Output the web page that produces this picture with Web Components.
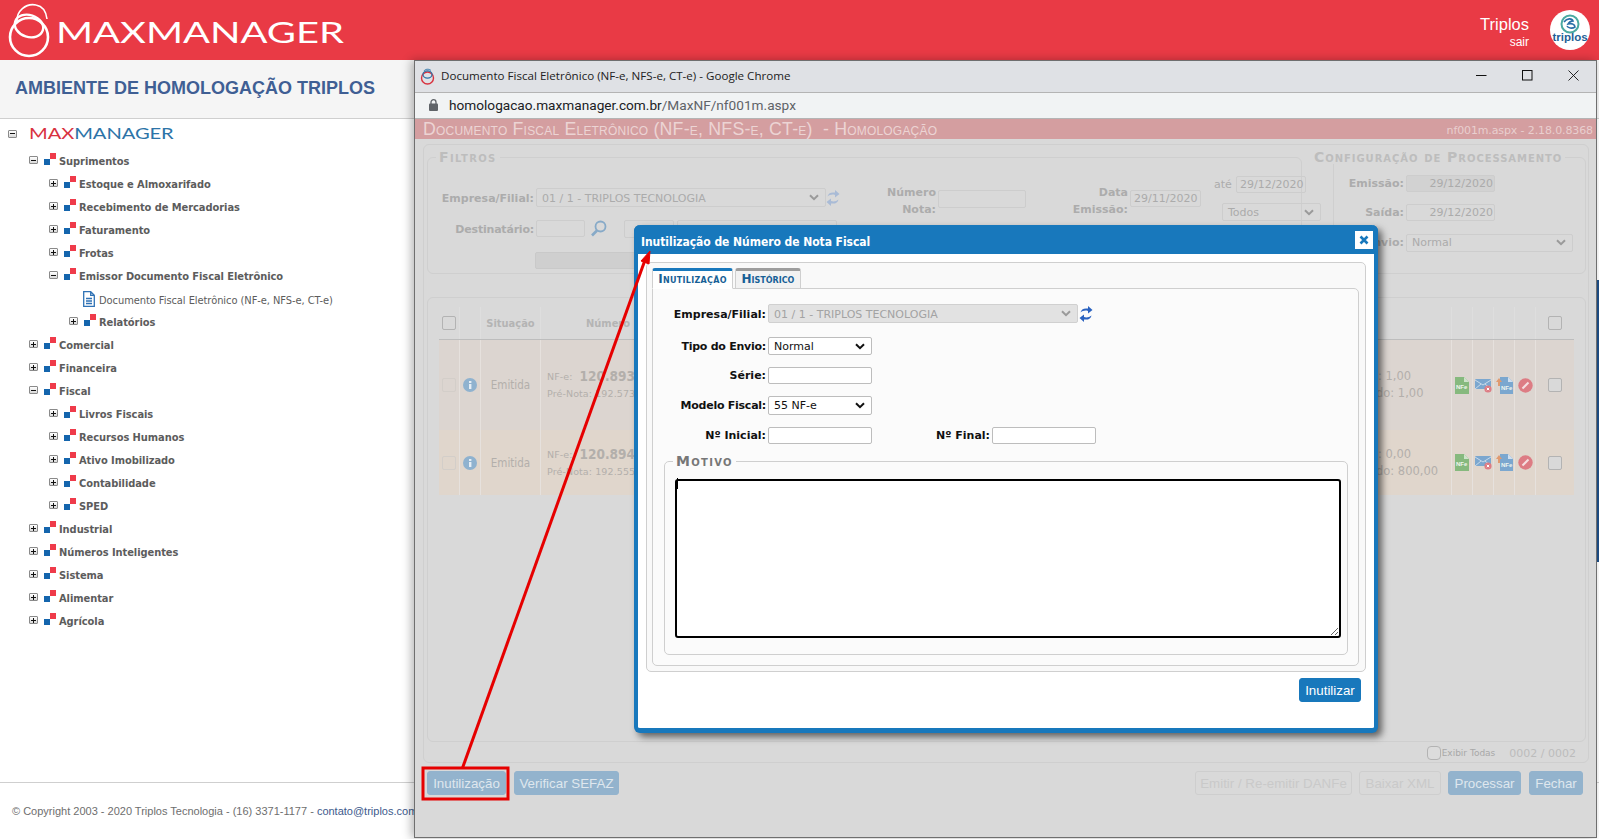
<!DOCTYPE html>
<html lang="pt-BR">
<head>
<meta charset="utf-8">
<title>MaxManager</title>
<style>
html,body{margin:0;padding:0;width:1599px;height:839px;overflow:hidden;background:#fff;font-family:"Liberation Sans",Arial,sans-serif}
</style>
</head>
<body>
<mm-app></mm-app>
<script>
const def=(n,css,render)=>customElements.define(n,class extends HTMLElement{
  connectedCallback(){ if(this.shadowRoot) return;
    const r=this.attachShadow({mode:'open'});
    r.innerHTML='<style>'+css+'</style>'+render(this);
  }});
const LABEL='"DejaVu Sans",Verdana,sans-serif';
const COND='"DejaVu Sans Condensed","DejaVu Sans",Tahoma,sans-serif';
const COLS='21px 21px 60px 1fr 21px 21px 21px 21px 38px';

/* ---------- small icons ---------- */
def('mm-refresh',':host{display:inline-flex}',e=>{const c=e.getAttribute('color')||'#2a62c0';return `<svg width="14" height="18" viewBox="0 0 14 18"><path d="M1.5 7.6C2 4.4 5 2.8 9 3.6V1l4.5 4L9 8.4V5.9C6 5.2 3.6 5.8 1.5 7.6z" fill="${c}"/><path d="M12.5 10.4C12 13.6 9 15.2 5 14.4V17L.5 13 5 9.6v2.5c3 .7 5.4.1 7.5-1.7z" fill="${c}"/></svg>`});
def('mm-info',':host{display:inline-flex}',()=>`<svg width="14" height="14" viewBox="0 0 14 14"><circle cx="7" cy="7" r="7" fill="#8fb2cf"/><rect x="6" y="6" width="2.4" height="5" fill="#e6eef5"/><rect x="6" y="3" width="2.4" height="2" fill="#e6eef5"/></svg>`);
def('mm-check',`:host{display:inline-block;width:12px;height:12px;border:1px solid var(--ck,#b3b3b3);border-radius:2px;background:var(--bg,transparent)}`,()=>'');
def('mm-nfe-icons',`:host{display:contents}
.c{display:flex;align-items:center;justify-content:center;border-right:1px solid var(--sep);box-sizing:border-box}
text{font:bold 6px "Liberation Sans",sans-serif;fill:#eef5ee}`,()=>`
<div class="c"><svg width="14" height="17" viewBox="0 0 14 17"><path d="M0 0h9l5 5v12H0z" fill="#86b97e"/><path d="M9 0l5 5H9z" fill="#cfe3cb"/><text x="1" y="12">NFe</text></svg></div>
<div class="c"><svg width="17" height="15" viewBox="0 0 17 15"><rect y="1" width="16" height="10" rx="1" fill="#7ba7cf"/><path d="M0 2l8 5 8-5M0 11l6-5M16 11l-6-5" stroke="#dbe6f0" stroke-width=".8" fill="none"/><circle cx="13" cy="11" r="3.6" fill="#dd7c84"/><path d="M11.8 9.8l2.4 2.4m0-2.4l-2.4 2.4" stroke="#fff" stroke-width="1"/></svg></div>
<div class="c"><svg width="17" height="17" viewBox="0 0 17 17"><path d="M4 0h8l5 5v12H4z" fill="#7ba7cf"/><path d="M12 0l5 5h-5z" fill="#cfdff0"/><path d="M3 1L0 5h2v4h2V5h2z" fill="#e09a70"/><text x="5" y="13">NFe</text></svg></div>
<div class="c"><svg width="15" height="15" viewBox="0 0 15 15"><circle cx="7.5" cy="7.5" r="7.2" fill="#dd7c84"/><path d="M4.5 10.5l6-6" stroke="#f5dfe1" stroke-width="2"/></svg></div>`);

/* ---------- form control ---------- */
def('mm-ctl',`:host{display:block;flex:none;box-sizing:border-box;font:var(--ctl-font,11px ${LABEL});letter-spacing:var(--ctl-ls,0)}
.b{box-sizing:border-box;height:100%;display:flex;align-items:center;border:1px solid var(--bd,#cdcdcd);border-radius:2px;background:var(--bg,transparent);color:var(--fg,#ababab);padding:0 var(--pad,5px);white-space:pre}
.b.r{justify-content:flex-end;padding-right:1px}
.t{flex:1;padding-top:var(--tp,0)}
svg{flex:none;margin-right:1px}`,e=>{
  const sel=e.hasAttribute('select');const v=e.getAttribute('value')||'';
  const arrow=sel?`<svg width="10" height="7" viewBox="0 0 10 7"><path d="M1 1.2l4 4 4-4" fill="none" stroke="var(--arr,#9a9a9a)" stroke-width="2"/></svg>`:'';
  e.style.width=e.getAttribute('w')+'px';e.style.height=e.getAttribute('h')+'px';
  return `<div class="b ${e.hasAttribute('right')?'r':''}">${e.hasAttribute('right')?v:`<span class="t">${v}</span>`}${arrow}</div>`;
});

/* ---------- buttons ---------- */
def('mm-btn',`:host{display:inline-flex;flex:none;align-items:center;justify-content:center;box-sizing:border-box;height:24px;border-radius:3px;font:13.33px "Liberation Sans",Arial,sans-serif;background:#93b3cd;color:#dfe7ee;border:1px solid #93b3cd}
:host([off]){background:transparent;color:#c9c9c9;border-color:#cecece}
:host([live]){background:#1878bc;color:#fff;border-color:#1878bc}`,e=>{e.style.width=e.getAttribute('w')+'px';return '<slot></slot>'});

/* ---------- header ---------- */
def('mm-wordmark',`:host{display:inline-block;font-family:Lato,"Open Sans",sans-serif;font-weight:400;white-space:nowrap;transform-origin:0 50%;line-height:1}
.a{color:var(--a)}.b{color:var(--b)}`,e=>`<span class="a">MAX</span><span class="b">MANAGER</span>`);
def('mm-header',`:host{display:flex;align-items:center;height:60px;background:#e93a45;color:#fff;box-sizing:border-box;padding:0 9px 0 8px}
svg.l{flex:none}
mm-wordmark{font-size:28.5px;--a:#fff;--b:#fff;margin-left:6px;transform:scaleX(1.4);margin-top:5px}
.sp{flex:1}
.u{text-align:right;margin-right:21px;margin-top:2px}
.n{font-size:16.5px;line-height:20px}.s{font-size:12px;line-height:14px;margin-top:1px}
.av{flex:none;margin-top:0}`,()=>`
<svg class="l" width="42" height="56" viewBox="0 0 42 56" fill="none" stroke="#fff"><circle cx="21" cy="35" r="19" stroke-width="2.6"/><ellipse cx="21" cy="24" rx="14.5" ry="11" stroke-width="2.4" transform="rotate(18 21 24)"/><path d="M9 20C8 9 18 1 28 3c6 1 10 6 11 14" stroke-width="1.6"/></svg>
<mm-wordmark></mm-wordmark><div class="sp"></div>
<div class="u"><div class="n">Triplos</div><div class="s">sair</div></div>
<svg class="av" width="40" height="40" viewBox="0 0 40 40"><circle cx="20" cy="20" r="20" fill="#fff"/><circle cx="20" cy="14" r="8.5" fill="none" stroke="#4aa9a0" stroke-width="2"/><path d="M14 12c3-4 8-4 9-1-3 0-4 1-5 3 3-1 7 0 7 3-3 2-7 1-8-1" fill="none" stroke="#2b6fa8" stroke-width="1.6"/><text x="20" y="31" text-anchor="middle" font-family="Liberation Sans" font-weight="700" font-size="11.5" fill="#1f5f96">triplos</text></svg>`);

/* ---------- tree ---------- */
def('mm-tree-node',`:host{display:block;font:bold 11px ${COND};letter-spacing:-.06px;color:#5c5c5c}
.r{display:flex;align-items:center;height:23px;white-space:nowrap}
.tg{flex:none;width:7px;height:6px;border:1px solid #8a8a8a;border-radius:1px;background:linear-gradient(#fff,#d8d8d8);position:relative;margin-top:-3px;margin-right:7px;box-sizing:content-box}
.tg:before{content:"";position:absolute;left:1px;right:1px;top:2.5px;height:1px;background:#111}
.tg.p:after{content:"";position:absolute;top:.5px;bottom:.5px;left:3px;width:1px;background:#111}
.ic{flex:none;width:12px;height:12px;margin-right:3px;position:relative;margin-top:-5px;margin-left:-1px}
.ic:before{content:"";position:absolute;left:0;bottom:0;width:6px;height:6px;background:#1465ad}
.ic:after{content:"";position:absolute;right:0;top:0;width:6px;height:6px;background:#ef3b4a}
.k{padding-left:20px}
:host([root]) .k{padding-left:21px}
:host([root]) .r{height:22px;margin-bottom:5px}
:host([root]) mm-wordmark{font-size:14.5px;--a:#d8323f;--b:#2c74a8;transform:scaleX(1.39);margin-left:5px;margin-top:1px}
:host([root]) .tg{margin-top:-1px}`,e=>{
  const st=e.getAttribute('state')||'plus';
  const t=`<span class="tg ${st==='plus'?'p':''}"></span>`;
  if(e.hasAttribute('root')) return `<div class="r">${t}<mm-wordmark></mm-wordmark></div><div class="k"><slot></slot></div>`;
  return `<div class="r">${t}<span class="ic"></span><span>${e.getAttribute('label')}</span></div><div class="k"><slot></slot></div>`;
});
def('mm-tree-doc',`:host{display:block}
.r{display:flex;align-items:center;height:23px;padding-left:14px;font:11px ${COND};color:#5c5c5c;white-space:nowrap}
svg{flex:none;margin-right:4px;margin-top:-1px}
span{padding-top:2px}`,e=>`<div class="r"><svg width="12" height="16" viewBox="0 0 12 16" fill="none" stroke="#2f72b5" stroke-width="1.3"><path d="M.7.7h7l3.6 3.6v11H.7zM7.7.7v3.6h3.6"/><path d="M3 7.5h6M3 10h6M3 12.5h6"/></svg><span>${e.getAttribute('label')}</span></div>`);

/* ---------- sidebar ---------- */
def('mm-sidebar',`:host{display:flex;flex-direction:column;height:779px;box-sizing:border-box;background:#fff}
.h{flex:none;box-sizing:border-box;background:#f5f5f5;border-bottom:1px solid #cfcfcf;height:59px;display:flex;align-items:center;padding:0 0 1px 15px;font:bold 18px "Liberation Sans",Arial,sans-serif;color:#3f5f94;white-space:nowrap}
.t{flex:1;padding:4px 0 0 8px;box-sizing:border-box}
.f{flex:none;height:57px;border-top:1px solid #cfcfcf;padding:22px 0 0 12px;box-sizing:border-box;font:11px "Liberation Sans",Arial,sans-serif;color:#6e6e6e;white-space:nowrap;overflow:hidden}
.f b{font-weight:400;color:#3d5a8c}`,()=>`
<div class="h">AMBIENTE DE HOMOLOGAÇÃO TRIPLOS</div>
<div class="t"><slot></slot></div>
<div class="f">© Copyright 2003 - 2020 Triplos Tecnologia - (16) 3371-1177 - <b>contato@triplos.com</b></div>`);

/* ---------- browser window ---------- */
def('mm-window',`:host{position:absolute;left:414px;top:60px;width:1183px;height:778px;box-sizing:border-box;border:1px solid #6f6f6f;background:#d9d9d9;box-shadow:-3px 0 9px rgba(0,0,0,.28);display:flex;flex-direction:column}
.tb{flex:none;height:32px;box-sizing:border-box;background:#dfe1e5;border-bottom:1px solid #b4b4b4;display:flex;align-items:center;padding-left:5px;font:11.6px "Open Sans","Noto Sans",sans-serif;color:#222;white-space:nowrap}
.tb .ti{flex:1;margin-left:6px;margin-top:-3px}
.ct{width:46px;height:31px;display:flex;align-items:center;justify-content:center;flex:none;margin-top:-2px}
.ad{flex:none;height:26px;box-sizing:border-box;background:#f1f3f4;border-bottom:1px solid #b4b4b4;display:flex;align-items:center;padding:0 0 1px 14px;font:13.65px "Roboto","Noto Sans",sans-serif;color:#202124;white-space:nowrap}
.ad svg{margin-right:11px;flex:none}
.ad i{font-style:normal;color:#5f6368}`,()=>`
<div class="tb"><svg width="15" height="17" viewBox="0 0 15 17" fill="none"><circle cx="7.5" cy="10" r="6" stroke="#d8323f" stroke-width="1.4"/><ellipse cx="7.5" cy="6.5" rx="4.5" ry="3.6" stroke="#2c74a8" stroke-width="1.2"/><path d="M4 3C5 1 9 .5 11 2.500" stroke="#2c74a8" stroke-width=".9"/></svg><span class="ti">Documento Fiscal Eletrônico (NF-e, NFS-e, CT-e) - Google Chrome</span>
<span class="ct"><svg width="11" height="11" viewBox="0 0 11 11"><path d="M0 5.500h10.500" stroke="#111"/></svg></span>
<span class="ct"><svg width="11" height="11" viewBox="0 0 11 11"><rect x=".5" y=".5" width="9.500" height="9.500" fill="none" stroke="#111"/></svg></span>
<span class="ct"><svg width="11" height="11" viewBox="0 0 11 11"><path d="M.5.5l10 10m0-10l-10 10" stroke="#111" stroke-width=".9"/></svg></span></div>
<div class="ad"><svg width="9" height="12" viewBox="0 0 9 12"><rect y="4.500" width="9" height="7.500" rx="1" fill="#5f6368"/><path d="M2 5V3.200a2.500 2.500 0 0 1 5 0V5" fill="none" stroke="#5f6368" stroke-width="1.3"/></svg><span>homologacao.maxmanager.com.br<i>/MaxNF/nf001m.aspx</i></span></div>
<slot></slot>`);

/* ---------- dimmed page in the window ---------- */
def('mm-band',`:host{display:flex;flex:none;align-items:center;justify-content:space-between;box-sizing:border-box;height:20px;background:#d49ea0;padding:1px 3px 0 8px;color:#ecd4d4;white-space:pre}
.a{font:small-caps 17.8px "Liberation Sans",Arial,sans-serif;letter-spacing:.2px}
.b{font:11px ${LABEL};color:#e9cfcf;letter-spacing:-.12px;padding-top:1px}`,()=>`<span class="a">Documento Fiscal Eletrônico (NF-e, NFS-e, CT-e)  - Homologação</span><span class="b">nf001m.aspx - 2.18.0.8368</span>`);

def('mm-filters',`:host{display:flex;gap:31px;--fg:#ababab;--bd:#cdcdcd;font:bold 11px ${LABEL};color:#acacac}
fieldset{margin:0;padding:0;height:124px;box-sizing:border-box;border:1px solid #cfcfcf;border-radius:6px;min-width:0}
legend{font:small-caps bold 14px ${LABEL};line-height:14px;letter-spacing:1.35px;color:#bdbdbd;padding:0 3px;margin-left:8px;white-space:nowrap}
.fl{width:875px;display:flex;align-items:flex-start}
.cf{width:253px}
.cf legend{margin-left:-23px;letter-spacing:.95px}
.ca{width:408px;flex:none;padding-top:24px;--tp:2px}
.row{display:flex;align-items:center}
.lb{text-align:right;flex:none;line-height:17px}
.ca .lb{width:106px;margin-right:2px;padding-top:2px}
.col{display:flex;align-items:flex-start;margin-top:26px;flex:none}
.col .lb{margin-right:2px;margin-top:-6px}
.th{flex:none;margin-top:12px;font-weight:400}
.bar{height:17px;width:310px;margin:14px 0 0 107px;background:#cfcfcf;border:1px solid #c9c9c9;border-radius:2px;box-sizing:border-box}
.cr{display:flex;align-items:center;height:17px;margin-bottom:12px}
.cr .lb{margin-right:2px;text-align:right}
.cb{padding-top:10px;width:252px}`,()=>`
<fieldset class="fl"><legend>Filtros</legend>
 <div class="ca">
  <div class="row"><span class="lb">Empresa/Filial:</span><mm-ctl select w="290" h="19" value="01 / 1 - TRIPLOS TECNOLOGIA"></mm-ctl><mm-refresh color="#a9bbd6"></mm-refresh></div>
  <div class="row" style="margin-top:12px"><span class="lb" style="letter-spacing:-.2px">Destinatário:</span><mm-ctl w="49" h="17"></mm-ctl>
   <svg style="margin-left:6px;flex:none" width="16" height="17" viewBox="0 0 16 17" fill="none" stroke="#87aac8"><circle cx="9.500" cy="6.500" r="5" stroke-width="1.800"/><path d="M6 10.500l-5 5" stroke-width="2.600"/></svg>
   <mm-ctl w="50" h="18" style="margin-left:17px"></mm-ctl><mm-ctl w="160" h="17" style="margin-left:3px"></mm-ctl></div>
  <div class="bar"></div>
 </div>
 <div class="col" style="margin-left:100px;"><span class="lb" style="width:100px;margin-left:-100px">Número<br>Nota:</span><mm-ctl w="88" h="18"></mm-ctl></div>
 <div class="col"><span class="lb" style="width:102px">Data<br>Emissão:</span><mm-ctl w="71" h="17" value="29/11/2020" style="--pad:3px"></mm-ctl></div>
 <div class="th">
  <div class="row" style="margin-left:13px"><span style="width:22px">até</span><mm-ctl w="70" h="17" value="29/12/2020" style="--pad:3px"></mm-ctl></div>
  <div style="margin:10px 0 0 21px"><mm-ctl select w="99" h="18" value="Todos"></mm-ctl></div>
 </div>
</fieldset>
<fieldset class="cf"><legend>Configuração de Processamento</legend>
 <div class="cb">
  <div class="cr" style="margin-top:1px"><span class="lb" style="width:70px">Emissão:</span><mm-ctl right w="89" h="17" value="29/12/2020" style="--bg:#d2d2d2"></mm-ctl></div>
  <div class="cr"><span class="lb" style="width:70px">Saída:</span><mm-ctl right w="89" h="17" value="29/12/2020"></mm-ctl></div>
  <div class="cr" style="padding-top:1px"><span class="lb" style="width:70px">Envio:</span><mm-ctl select w="167" h="18" value="Normal"></mm-ctl></div>
 </div>
</fieldset>`);

def('mm-row',`:host{display:grid;grid-template-columns:${COLS};--sep:#e6e1dd;background:var(--row);height:var(--h);font:11px ${LABEL};color:#b3afab}
.c{display:flex;align-items:center;justify-content:center;border-right:1px solid var(--sep);box-sizing:border-box}
.m{justify-content:space-between;padding-left:6px;overflow:hidden}
.l{line-height:17px;white-space:nowrap}
.s{font-size:9.500px;letter-spacing:.1px}
.n{font:bold 13.500px ${COND};margin-left:7px;vertical-align:-1px}
.rv{width:75px;flex:none;line-height:17px;white-space:pre;font-size:11.500px}
.e{font:11.500px ${COND}}
.x{border:0}`,e=>`
<div class="c" style="--ck:#d3cec9"><mm-check></mm-check></div><div class="c"><mm-info></mm-info></div>
<div class="c e">Emitida</div>
<div class="c m"><div><div class="l"><span class="s">NF-e:</span><span class="n">${e.getAttribute('nf')}</span></div><div class="l s">Pré-Nota: ${e.getAttribute('pre')}</div></div>
<div class="rv"><div style="padding-left:2px">${e.getAttribute('v1')}</div><div>${e.getAttribute('v2')}</div></div></div>
<mm-nfe-icons></mm-nfe-icons><div class="c x"><mm-check style="--bg:#d9d9d9"></mm-check></div>`);

def('mm-table',`:host{display:block;box-sizing:border-box;height:445px;margin-top:23px;border:1px solid #cfcfcf;border-radius:6px;padding:9px 11px 0}
.h{display:grid;grid-template-columns:${COLS};height:33px;border-bottom:1px solid #bdbdbd;box-sizing:border-box;font:bold 11px ${COND};color:#b4b4b4;align-items:center}
.h>*{display:flex;align-items:center;justify-content:center;height:100%;border-right:1px solid #dedede;box-sizing:border-box;white-space:nowrap}
.h .n{justify-content:flex-start;padding-left:45px}`,()=>`
<div class="h"><div><mm-check></mm-check></div><div></div><div>Situação</div><div class="n">Número</div><div></div><div></div><div></div><div></div><div style="border:0"><mm-check></mm-check></div></div>
<slot></slot>`);

def('mm-tfoot',`:host{display:flex;align-items:center;justify-content:flex-end;box-sizing:border-box;height:21px;padding:1px 10px 0 0;color:#b0b0b0;font:12px ${LABEL}}
span.e{font-size:9px;margin-left:1px;color:#a8a8a8}
span.p{margin-left:14px;font-size:11px;color:#bcbcbc}
mm-check{border-radius:4px;--bg:#dcdcdc}`,()=>`<mm-check></mm-check><span class="e">Exibir Todas</span><span class="p">0002 / 0002</span>`);

def('mm-panel',`:host{display:block;flex:none;box-sizing:border-box;height:619px;margin:5px 8px 0;width:1166px;border:1px solid #cfcfcf;border-radius:6px;padding:5px 2px 0 3px}`,()=>`<slot></slot>`);
def('mm-actions',`:host{display:flex;align-items:center;gap:7px;flex:none;margin-top:8px;padding:0 13px 0 12px}
.sp{flex:1}`,()=>`<slot name="l"></slot><div class="sp"></div><slot name="r"></slot>`);

/* ---------- modal ---------- */
def('mm-modal',`:host{position:absolute;left:219px;top:164px;width:744px;height:508px;box-sizing:border-box;background:#fff;border:solid #1878bc;border-width:0 4px 5px;border-radius:6px;box-shadow:4px 4px 7px rgba(0,0,0,.55);display:flex;flex-direction:column;color:#111}
.t{flex:none;box-sizing:border-box;height:29px;margin:0 -4px;background:#1878bc;border-radius:6px 6px 0 0;display:flex;align-items:center;justify-content:space-between;padding:0 5px 0 7px;color:#fff;font:bold 12px ${COND};letter-spacing:-.05px}
.t>span:first-child{padding-top:4px}
.x{width:18px;height:18px;background:#fff;display:flex;align-items:center;justify-content:center}
.box{flex:none;margin:8px 8px 0;height:410px;box-sizing:border-box;border:1px solid #cfcfcf;border-radius:5px;background:#f9f9f9;padding:5px 6px 0 5px}
.tabs{display:flex;gap:2px;height:20px;position:relative;z-index:1;font:small-caps bold 12px ${LABEL}}
.tab{box-sizing:border-box;height:21px;padding-bottom:2px;border:1px solid #cfcfcf;border-top:3px solid #9d9d9d;border-radius:3px 3px 0 0;display:flex;align-items:center;justify-content:center;color:#175f96;background:#f2f2f2;width:66px}
.tab.on{width:81px;border-top-color:#1878bc;background:#fff;border-bottom-color:#fff;letter-spacing:.3px}
.in{box-sizing:border-box;height:378px;border:1px solid #cfcfcf;border-radius:0 5px 5px 5px;background:#fbfbfb;padding-top:15px;font:bold 11px ${LABEL};--fg:#111;--bd:#bdbdbd;--bg:#fff;--arr:#111;--pad:5px}
.r{display:flex;align-items:center;margin-bottom:12px}
.l{width:113px;margin-right:2px;text-align:right;flex:none;white-space:nowrap}
.l.n{letter-spacing:-.25px}
mm-ctl{font-weight:400}
fieldset{margin:-1px 10px 0 11px;padding:0;border:1px solid #cfcfcf;border-radius:5px;height:200px;box-sizing:border-box;min-width:0;position:relative}
legend{margin-left:8px;padding:0 3px;font:small-caps bold 14px ${LABEL};line-height:13px;letter-spacing:1.3px;color:#777}
textarea{display:block;box-sizing:border-box;margin:11px 0 0 10px;width:666px;height:159px;border:2px solid #000;border-radius:3px;background:#fff;outline:0;font:12px ${LABEL}}
.cr{position:absolute;left:12px;top:10px;width:1px;height:11px;background:#000}
.b{flex:none;display:flex;justify-content:flex-end;margin:6px 13px 0 0}`,()=>`
<div class="t"><span>Inutilização de Número de Nota Fiscal</span><span class="x"><svg width="10" height="10" viewBox="0 0 10 10"><path d="M1.500 1.500l7 7m0-7l-7 7" stroke="#1878bc" stroke-width="2.600"/></svg></span></div>
<div class="box">
 <div class="tabs"><div class="tab on">Inutilização</div><div class="tab">Histórico</div></div>
 <div class="in">
  <div class="r" style="margin-bottom:14px"><span class="l" style="padding-top:2px">Empresa/Filial:</span><mm-ctl select w="310" h="19" value="01 / 1 - TRIPLOS TECNOLOGIA" style="--tp:2px;--fg:#a3a3a3;--bg:#e2e2e2;--bd:#d0d0d0;--arr:#9a9a9a"></mm-ctl><mm-refresh style="margin-left:1px"></mm-refresh></div>
  <div class="r"><span class="l n">Tipo do Envio:</span><mm-ctl select w="104" h="18" value="Normal"></mm-ctl></div>
  <div class="r"><span class="l">Série:</span><mm-ctl w="104" h="17"></mm-ctl></div>
  <div class="r"><span class="l n">Modelo Fiscal:</span><mm-ctl select w="104" h="19" value="55 NF-e"></mm-ctl></div>
  <div class="r"><span class="l">Nº Inicial:</span><mm-ctl w="104" h="17"></mm-ctl><span class="l" style="width:118px">Nº Final:</span><mm-ctl w="104" h="17"></mm-ctl></div>
  <fieldset><legend>Motivo</legend><textarea aria-label="Motivo"></textarea><span class="cr"></span></fieldset>
 </div>
</div>
<div class="b"><mm-btn live w="62">Inutilizar</mm-btn></div>`);

/* ---------- annotation ---------- */
def('mm-annotation',`:host{position:absolute;inset:0;pointer-events:none;z-index:5}svg{display:block}`,()=>`
<svg width="1599" height="839" viewBox="0 0 1599 839"><path d="M462.500 768L645 260" stroke="#e60000" stroke-width="3"/><path d="M650 251l-9 10 8 3z" fill="#e60000" stroke="#e60000" stroke-width="1"/><rect x="423" y="768" width="85" height="31" fill="none" stroke="#e60000" stroke-width="3"/></svg>`);

/* ---------- app ---------- */
def('mm-app',`:host{display:block;position:relative;width:1599px;height:839px;overflow:hidden;background:#fff}
.edge{position:absolute;right:0;top:280px;width:2px;height:282px;background:#1c4a80}`,()=>`
<mm-header></mm-header>
<mm-sidebar>
 <mm-tree-node root state="minus">
  <mm-tree-node state="minus" label="Suprimentos">
   <mm-tree-node label="Estoque e Almoxarifado"></mm-tree-node>
   <mm-tree-node label="Recebimento de Mercadorias"></mm-tree-node>
   <mm-tree-node label="Faturamento"></mm-tree-node>
   <mm-tree-node label="Frotas"></mm-tree-node>
   <mm-tree-node state="minus" label="Emissor Documento Fiscal Eletrônico">
    <mm-tree-doc label="Documento Fiscal Eletrônico (NF-e, NFS-e, CT-e)"></mm-tree-doc>
    <mm-tree-node label="Relatórios"></mm-tree-node>
   </mm-tree-node>
  </mm-tree-node>
  <mm-tree-node label="Comercial"></mm-tree-node>
  <mm-tree-node label="Financeira"></mm-tree-node>
  <mm-tree-node state="minus" label="Fiscal">
   <mm-tree-node label="Livros Fiscais"></mm-tree-node>
   <mm-tree-node label="Recursos Humanos"></mm-tree-node>
   <mm-tree-node label="Ativo Imobilizado"></mm-tree-node>
   <mm-tree-node label="Contabilidade"></mm-tree-node>
   <mm-tree-node label="SPED"></mm-tree-node>
  </mm-tree-node>
  <mm-tree-node label="Industrial"></mm-tree-node>
  <mm-tree-node label="Números Inteligentes"></mm-tree-node>
  <mm-tree-node label="Sistema"></mm-tree-node>
  <mm-tree-node label="Alimentar"></mm-tree-node>
  <mm-tree-node label="Agrícola"></mm-tree-node>
 </mm-tree-node>
</mm-sidebar>
<mm-window>
 <mm-band></mm-band>
 <mm-panel>
  <mm-filters></mm-filters>
  <mm-table>
   <mm-row nf="120.893" pre="192.573" v1=": 1,00" v2="do: 1,00" style="--row:#dcd5d0;--h:90px"></mm-row>
   <mm-row nf="120.894" pre="192.555" v1=": 0,00" v2="do: 800,00" style="--row:#e0d6cc;--h:65px"></mm-row>
  </mm-table>
  <mm-tfoot></mm-tfoot>
 </mm-panel>
 <mm-actions>
  <mm-btn slot="l" w="79">Inutilização</mm-btn><mm-btn slot="l" w="105" style="margin-left:1px">Verificar SEFAZ</mm-btn>
  <mm-btn slot="r" off w="157">Emitir / Re-emitir DANFe</mm-btn><mm-btn slot="r" off w="82">Baixar XML</mm-btn><mm-btn slot="r" w="73">Processar</mm-btn><mm-btn slot="r" w="54" style="margin-left:1px">Fechar</mm-btn>
 </mm-actions>
 <mm-modal></mm-modal>
</mm-window>
<div class="edge"></div>
<mm-annotation></mm-annotation>`);
</script>
</body>
</html>
